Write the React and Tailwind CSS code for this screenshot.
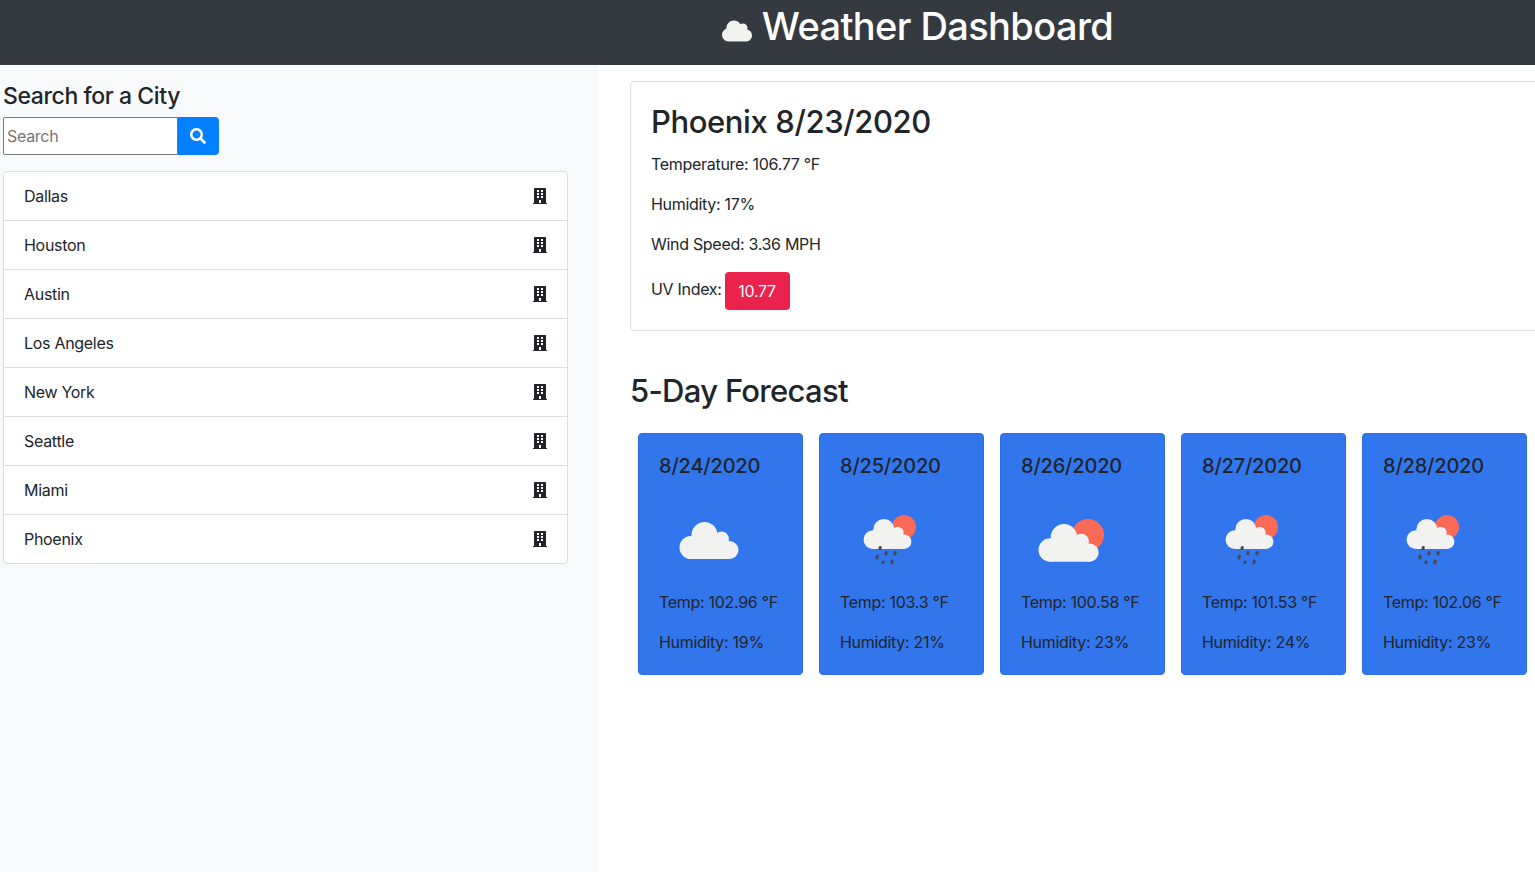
import { FaBuilding, FaCloud, FaSearch } from "react-icons/fa";

const cities = ["Dallas", "Houston", "Austin", "Los Angeles", "New York", "Seattle", "Miami", "Phoenix"];

const forecast = [
  { date: "8/24/2020", icon: "cloud", temp: "102.96", humidity: "19" },
  { date: "8/25/2020", icon: "rain", temp: "103.3", humidity: "21" },
  { date: "8/26/2020", icon: "sun", temp: "100.58", humidity: "23" },
  { date: "8/27/2020", icon: "rain", temp: "101.53", humidity: "24" },
  { date: "8/28/2020", icon: "rain", temp: "102.06", humidity: "23" },
];

// cloud is 59x37 in its own units
const Cloud = ({ x, y, scale }) => (
  <g transform={`translate(${x} ${y}) scale(${scale})`} fill="#f2f2f0">
    <circle cx="11" cy="25.5" r="11.5" />
    <circle cx="24.5" cy="13" r="13" />
    <circle cx="41.5" cy="17" r="7.5" />
    <circle cx="49.5" cy="28" r="9" />
    <rect x="11" y="20" width="39" height="17" />
  </g>
);

// openweathermap style icons, all on a 80x80 box
const WeatherIcon = ({ type }) => {
  if (type === "cloud") {
    return (
      <svg width="80" height="80" viewBox="0 0 80 80" className="overflow-visible">
        <Cloud x={21} y={22} scale={1} />
      </svg>
    );
  }
  if (type === "sun") {
    return (
      <svg width="80" height="80" viewBox="0 0 80 80" className="overflow-visible">
        <circle cx="67" cy="35" r="16" fill="#fa6a56" />
        <Cloud x={18} y={24} scale={1.02} />
      </svg>
    );
  }
  return (
    <svg width="80" height="80" viewBox="0 0 80 80" className="overflow-visible">
      <circle cx="64" cy="27" r="12" fill="#fa6a56" />
      <Cloud x={24} y={19} scale={0.81} />
      <g stroke="#444a52" strokeWidth="3" strokeLinecap="round">
        <path d="M40.3 47.5l-.4 1.2" />
        <path d="M37.4 56l-.6 2" />
        <path d="M46.3 52.5l-.5 1.4" />
        <path d="M55.3 52.5l-.5 1.4" />
        <path d="M43.2 62l-.3 .8" />
        <path d="M52.4 61l-.6 2" />
      </g>
    </svg>
  );
};

const App = () => {
  return (
    <div className="h-[872px] overflow-hidden bg-white font-['Inter',sans-serif] text-base tracking-[-0.3px] text-[#212529]">
      <header className="flex h-[65px] items-start justify-center bg-[#343a40] pl-[300px] pt-[2px] text-white">
        <FaCloud className="mr-[10px] mt-[14px] h-[30px] w-[30px] text-[#f2f2f0]" />
        <h1 className="text-[38px] leading-[48px] font-medium tracking-[-0.6px]">Weather Dashboard</h1>
      </header>
      <div className="flex h-[807px]">
        <aside className="w-[599px] shrink-0 bg-[#f8f9fa] pl-[3px] pt-[17px]">
          <h2 className="text-[23px] leading-[29px] font-medium tracking-[-0.4px]">Search for a City</h2>
          <div className="mt-[6px] flex h-[38px] w-[216px]">
            <input
              placeholder="Search"
              className="h-[38px] w-[175px] rounded-l-[2px] border border-[#767676] bg-white px-[3px] text-base outline-none placeholder:text-[#757575]"
            />
            <button className="flex h-[38px] w-[41px] items-center justify-center rounded-r-[4px] bg-[#0280ff] pr-[2px] text-white">
              <FaSearch className="h-4 w-4" />
            </button>
          </div>
          <ul className="mt-[16px] w-[565px] rounded-[4px] border border-[#dfdfdf] bg-white">
            {cities.map((city, i) => (
              <li
                key={city}
                className={`flex items-center justify-between pl-[20px] pr-[20px] ${i > 0 ? "h-[49px] border-t border-[#dfdfdf]" : "h-[48px]"}`}
              >
                <span>{city}</span>
                <FaBuilding className="h-4 w-[14px] text-[#212529]" />
              </li>
            ))}
          </ul>
        </aside>
        <main className="min-w-0 flex-1 pl-[31px] pt-[16px]">
          <section className="h-[250px] w-[1000px] rounded-[4px] border border-[#dfdfdf] px-[20px] pt-[21px]">
            <h2 className="text-[31px] leading-[38px] font-medium tracking-[-0.4px]">Phoenix 8/23/2020</h2>
            <p className="mt-[11px] leading-[24px]">Temperature: 106.77 °F</p>
            <p className="mt-[16px] leading-[24px]">Humidity: 17%</p>
            <p className="mt-[16px] leading-[24px]">Wind Speed: 3.36 MPH</p>
            <p className="mt-[16px] flex items-start leading-[24px]">
              <span className="mt-[5px]">UV Index:</span>
              <span className="ml-[3px] flex h-[38px] w-[65px] items-center justify-center rounded-[4px] bg-[#e9234b] text-white">
                10.77
              </span>
            </p>
          </section>
          <h2 className="mt-[41px] text-[31px] leading-[38px] font-medium tracking-[-0.7px]">5-Day Forecast</h2>
          <div className="mt-[23px] flex gap-[16px] pl-[8px]">
            {forecast.map((day) => (
              <div
                key={day.date}
                className="h-[242px] w-[165px] shrink-0 rounded-[4px] border border-[#2c6ddf] bg-[#3276ee] pl-[20px] pt-[20px]"
              >
                <h5 className="text-xl leading-6 font-medium tracking-[-0.2px]">{day.date}</h5>
                <div className="mt-[22px] h-[80px] w-[80px]">
                  <WeatherIcon type={day.icon} />
                </div>
                <p className="mt-[10px] leading-[24px]">Temp: {day.temp} °F</p>
                <p className="mt-[16px] leading-[24px]">Humidity: {day.humidity}%</p>
              </div>
            ))}
          </div>
        </main>
      </div>
    </div>
  );
};

export default App;
